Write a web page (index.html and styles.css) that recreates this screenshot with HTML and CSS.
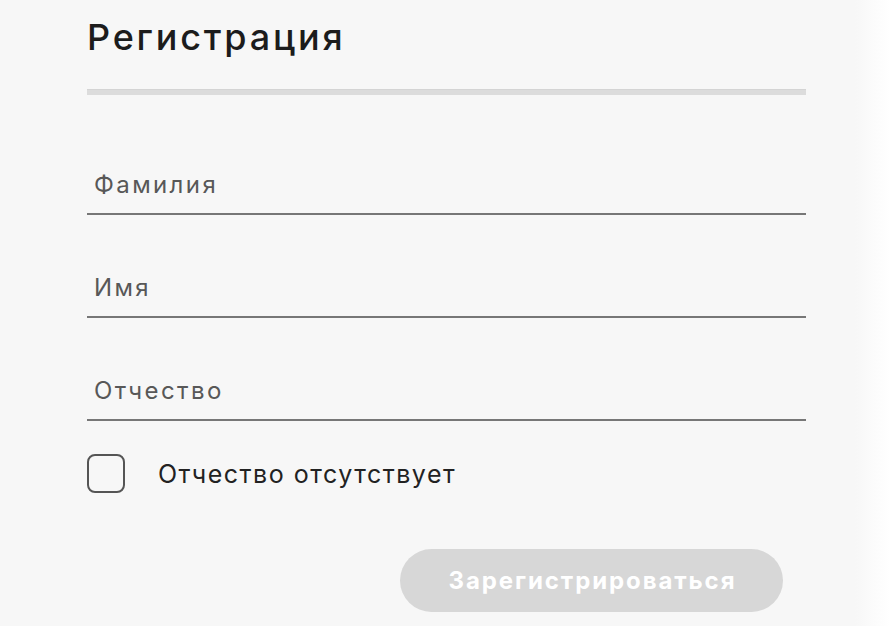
FILE: index.html
```html
<!DOCTYPE html>
<html lang="ru">
<head>
    <meta charset="UTF-8">
    <meta name="viewport" content="width=device-width, initial-scale=1.0">
    <title>Регистрация</title>
    <link rel="stylesheet" href="styles.css">
</head>
<body>
    <main class="register">
        <h1 class="register-title">Регистрация</h1>
        <div class="register-divider"></div>

        <form class="register-form">
            <label class="field">
                <input type="text" name="last-name" placeholder="Фамилия">
            </label>
            <label class="field">
                <input type="text" name="first-name" placeholder="Имя">
            </label>
            <label class="field">
                <input type="text" name="middle-name" placeholder="Отчество">
            </label>

            <label class="check">
                <input type="checkbox" id="no-middle-name">
                <span class="check-box"></span>
                <span class="check-text">Отчество отсутствует</span>
            </label>

            <div class="register-actions">
                <button type="submit" class="register-button" disabled>Зарегистрироваться</button>
            </div>
        </form>
    </main>
</body>
</html>
```

FILE: styles.css
```css
/* Общие стили */
body {
    margin: 0;
    font-family: Inter, "Liberation Sans", sans-serif;
    background: linear-gradient(to right, #f7f7f7 0, #f7f7f7 855px, #ffffff 890px);
    height: 626px;
    overflow: hidden;
}

.register {
    width: 719px;
    padding: 15px 0 0 87px;
}

.register-title {
    margin: 0;
    font-size: 36px;
    line-height: 44px;
    font-weight: 500;
    letter-spacing: 2.8px;
    color: #1c1c1c;
}

.register-divider {
    margin-top: 30px;
    height: 6px;
    background: #dcdcdc;
    border-top: 1px solid #d4d4d4;
    box-sizing: border-box;
}

.register-form {
    display: flex;
    flex-direction: column;
}

/* Поля ввода */
.field {
    display: block;
    margin-top: 43px;
}

.field:first-child {
    margin-top: 60px;
}

.field input {
    display: block;
    width: 100%;
    height: 60px;
    box-sizing: border-box;
    padding: 0 0 0 7px;
    border: none;
    border-bottom: 2px solid #777;
    background: transparent;
    font-family: inherit;
    font-size: 24px;
    letter-spacing: 2.4px;
    color: #333;
    outline: none;
}

.field input::placeholder {
    color: #585858;
}

/* Чекбокс */
.check {
    display: flex;
    align-items: center;
    gap: 33px;
    margin-top: 33px;
    cursor: pointer;
}

.check input {
    display: none;
}

.check-box {
    width: 38px;
    height: 39px;
    box-sizing: border-box;
    border: 2px solid #555;
    border-radius: 8px;
}

.check-text {
    font-size: 25px;
    letter-spacing: 1.5px;
    color: #222;
}

/* Кнопка */
.register-actions {
    display: flex;
    justify-content: flex-end;
    padding-right: 23px;
    margin-top: 56px;
}

.register-button {
    width: 383px;
    height: 63px;
    padding: 0 0 0 2px;
    border: none;
    border-radius: 32px;
    background: #d7d7d7;
    color: #fff;
    font-family: inherit;
    font-size: 24px;
    font-weight: 700;
    letter-spacing: 1.9px;
}
```
